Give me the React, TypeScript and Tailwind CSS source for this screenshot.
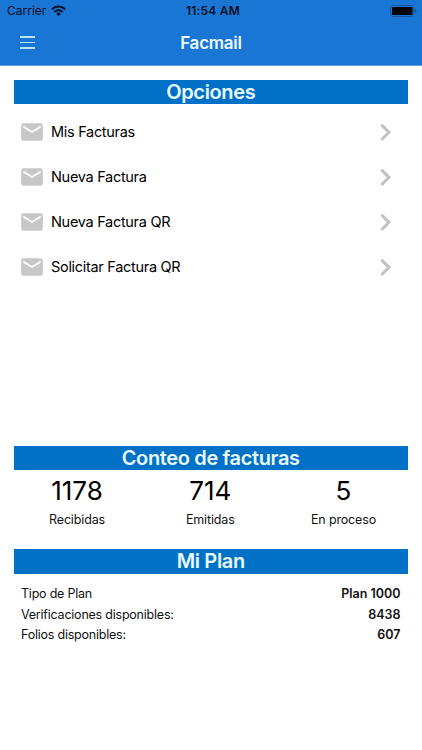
import type { ReactNode } from "react";

interface PlanRow {
  label: string;
  value: string;
}

const options = ["Mis Facturas", "Nueva Factura", "Nueva Factura QR", "Solicitar Factura QR"];

const counts = [
  { label: "Recibidas", value: 1178 },
  { label: "Emitidas", value: 714 },
  { label: "En proceso", value: 5 },
];

const plan: PlanRow[] = [
  { label: "Tipo de Plan", value: "Plan 1000" },
  { label: "Verificaciones disponibles:", value: "8438" },
  { label: "Folios disponibles:", value: "607" },
];

function WifiIcon() {
  return (
    <svg className="ml-[5px] h-[11px] w-[15px]" viewBox="0 0 15 11" fill="none" stroke="#050f24" strokeWidth="2.1">
      <path d="M1 4.2a9.2 9.2 0 0 1 13 0" />
      <path d="M3.5 6.9a5.7 5.7 0 0 1 8 0" />
      <path d="M7.5 10.9 5.3 8.7a3.1 3.1 0 0 1 4.4 0z" fill="#050f24" stroke="none" />
    </svg>
  );
}

function BatteryIcon() {
  return (
    <svg className="h-[12px] w-[27px]" viewBox="0 0 27 12">
      <rect x="0.5" y="0.5" width="23.5" height="11" rx="2.5" fill="none" stroke="#1555a0" />
      <rect x="2" y="2" width="20.5" height="8" rx="1" fill="#000" />
      <path d="M25 4v4c1-.3 1.600-1.100 1.600-2s-.6-1.700-1.600-2z" fill="#1555a0" />
    </svg>
  );
}

function MailIcon() {
  return (
    <svg className="h-[26px] w-[26px]" viewBox="0 0 24 24" fill="#c7c7c9">
      <path d="M20 4H4c-1.100 0-1.990.9-1.990 2L2 18c0 1.100.9 2 2 2h16c1.100 0 2-.9 2-2V6c0-1.100-.9-2-2-2zm0 4-8 5-8-5V6l8 5 8-5v2z" />
    </svg>
  );
}

function ChevronIcon() {
  return (
    <svg
      className="h-[18px] w-[12px]"
      viewBox="0 0 12 18"
      fill="none"
      stroke="#c3c3c5"
      strokeWidth="3.1"
      strokeLinecap="round"
    >
      <path d="M2.300 2.600 8.900 9.300l-6.600 6.700" />
    </svg>
  );
}

function SectionTitle({ children }: { children: ReactNode }) {
  return (
    <h2 className="h-[24.500px] bg-[#0071c6] text-center text-[20px] leading-[24px] font-semibold tracking-[-0.36px] text-[#eafaff]">
      {children}
    </h2>
  );
}

export default function App() {
  return (
    <div className="h-[750px] w-[422px] overflow-hidden bg-white font-['Inter',sans-serif] text-[#111]">
      <header className="h-[66px] border-b border-[#5f9bd8] bg-[#1976d5]">
        {/* Status bar */}
        <div className="grid h-[21px] grid-cols-3 items-center pr-[5px] pl-[7px] text-[#050f24]">
          <div className="flex items-center text-[12px]">
            Carrier
            <WifiIcon />
          </div>
          <span className="pt-px pl-[2px] text-center text-[12px] font-semibold tracking-[0.2px]">11:54 AM</span>
          <div className="flex justify-end">
            <BatteryIcon />
          </div>
        </div>

        {/* Nav bar */}
        <div className="grid h-[44px] grid-cols-3 items-center">
          <button className="mb-px ml-[20px] flex w-[15px] flex-col gap-[4px]" aria-label="Menu">
            <span className="h-[1.500px] w-full bg-[#b5e4fb]" />
            <span className="h-[1.500px] w-full bg-[#b5e4fb]" />
            <span className="h-[1.500px] w-full bg-[#b5e4fb]" />
          </button>
          <h1 className="pt-[2px] text-center text-[17px] font-semibold tracking-[-0.25px] text-[#eafaff]">Facmail</h1>
        </div>
      </header>

      <main className="pt-[13.500px] pr-[14.500px] pl-[14px]">
        <section className="h-[366px]">
          <SectionTitle>Opciones</SectionTitle>
          <ul className="pt-[5.500px]">
            {options.map((option) => (
              <li key={option} className="flex h-[44.900px] items-center pr-[16px] pl-[5px]">
                <MailIcon />
                <span className="ml-[6px] flex-1 text-[14.500px] tracking-[-0.3px] text-black">{option}</span>
                <ChevronIcon />
              </li>
            ))}
          </ul>
        </section>

        <section className="h-[103.500px]">
          <SectionTitle>Conteo de facturas</SectionTitle>
          <div className="flex justify-between pt-[4px] pr-px">
            {counts.map((item) => (
              <div key={item.label} className="flex w-[126px] flex-col items-center">
                <span className="text-[26px] leading-[33px] text-black">{item.value}</span>
                <span className="mt-[5px] text-[12.500px] leading-[16px] tracking-[-0.15px]">{item.label}</span>
              </div>
            ))}
          </div>
        </section>

        <section>
          <SectionTitle>Mi Plan</SectionTitle>
          <dl className="pt-[10.500px] pr-[7px] pl-[7px] text-[12.500px]">
            {plan.map((row) => (
              <div key={row.label} className="flex h-[20.700px] items-center justify-between">
                <dt className="tracking-[-0.22px]">{row.label}</dt>
                <dd className="font-semibold">{row.value}</dd>
              </div>
            ))}
          </dl>
        </section>
      </main>
    </div>
  );
}
